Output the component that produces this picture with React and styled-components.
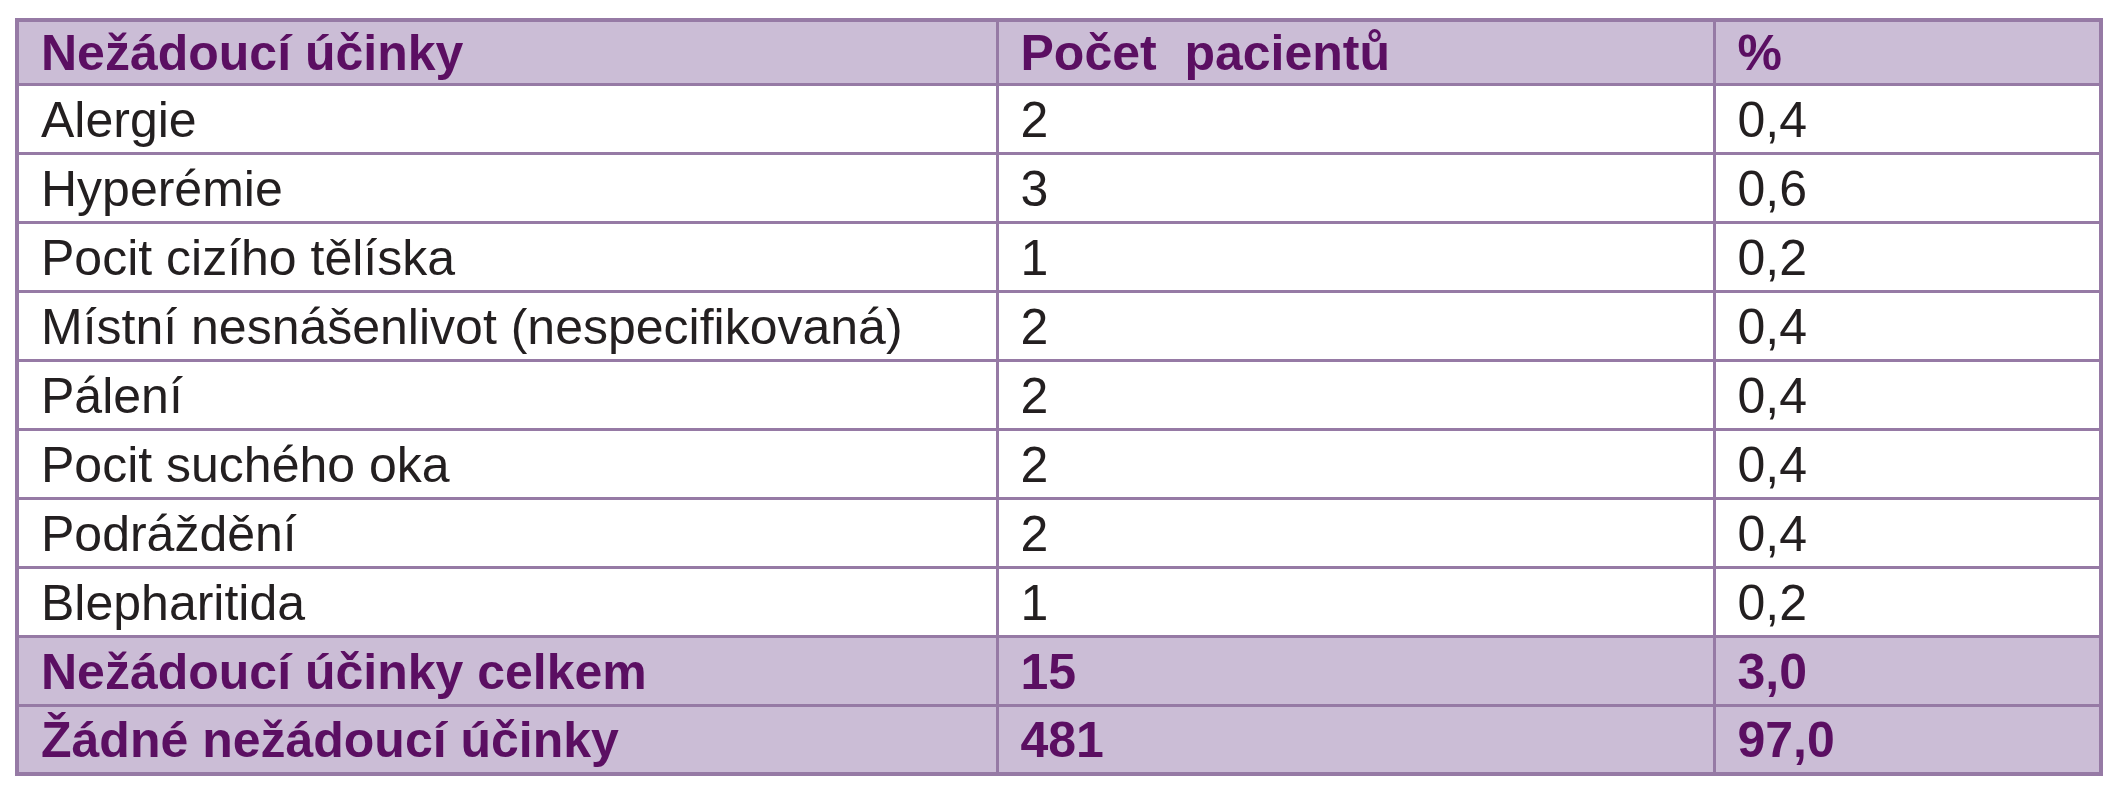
import styled, { createGlobalStyle } from "styled-components";

const GlobalStyle = createGlobalStyle`
  body {
    margin: 0;
    background: #ffffff;
    font-family: "Liberation Sans", Arial, sans-serif;
  }
`;

const Page = styled.div`
  padding: 18px 0 0 15px;
`;

const Table = styled.table`
  width: 2084px;
  table-layout: fixed;
  border-collapse: collapse;
  border: 4px solid #967aa5;
`;

const Row = styled.tr`
  height: ${(props) => (props.$head ? "64px" : "69px")};
  background: ${(props) => (props.$shaded ? "#cbbdd6" : "#ffffff")};
`;

const Cell = styled.td`
  border: 3px solid #967aa5;
  padding: 2px 0 0 22px;
  font-family: "Liberation Sans", Arial, Helvetica, sans-serif;
  font-size: 50px;
  line-height: 1;
  white-space: nowrap;
  vertical-align: middle;
  font-weight: ${(props) => (props.$bold ? 700 : 400)};
  color: ${(props) => (props.$bold ? "#5b0f62" : "#231f20")};
`;

const rows = [
  ["Alergie", "2", "0,4"],
  ["Hyperémie", "3", "0,6"],
  ["Pocit cizího tělíska", "1", "0,2"],
  ["Místní nesnášenlivot (nespecifikovaná)", "2", "0,4"],
  ["Pálení", "2", "0,4"],
  ["Pocit suchého oka", "2", "0,4"],
  ["Podráždění", "2", "0,4"],
  ["Blepharitida", "1", "0,2"],
];

const totals = [
  ["Nežádoucí účinky celkem", "15", "3,0"],
  ["Žádné nežádoucí účinky", "481", "97,0"],
];

export default function App() {
  return (
    <Page>
      <GlobalStyle />
      <Table>
        <colgroup>
          <col style={{ width: "980px" }} />
          <col style={{ width: "717px" }} />
          <col style={{ width: "387px" }} />
        </colgroup>
        <tbody>
          <Row $head $shaded>
            <Cell $bold>Nežádoucí účinky</Cell>
            <Cell $bold>Počet&nbsp; pacientů</Cell>
            <Cell $bold>%</Cell>
          </Row>
          {rows.map((r) => (
            <Row key={r[0]}>
              {r.map((c, i) => (
                <Cell key={i}>{c}</Cell>
              ))}
            </Row>
          ))}
          {totals.map((r) => (
            <Row key={r[0]} $shaded>
              {r.map((c, i) => (
                <Cell key={i} $bold>
                  {c}
                </Cell>
              ))}
            </Row>
          ))}
        </tbody>
      </Table>
    </Page>
  );
}
